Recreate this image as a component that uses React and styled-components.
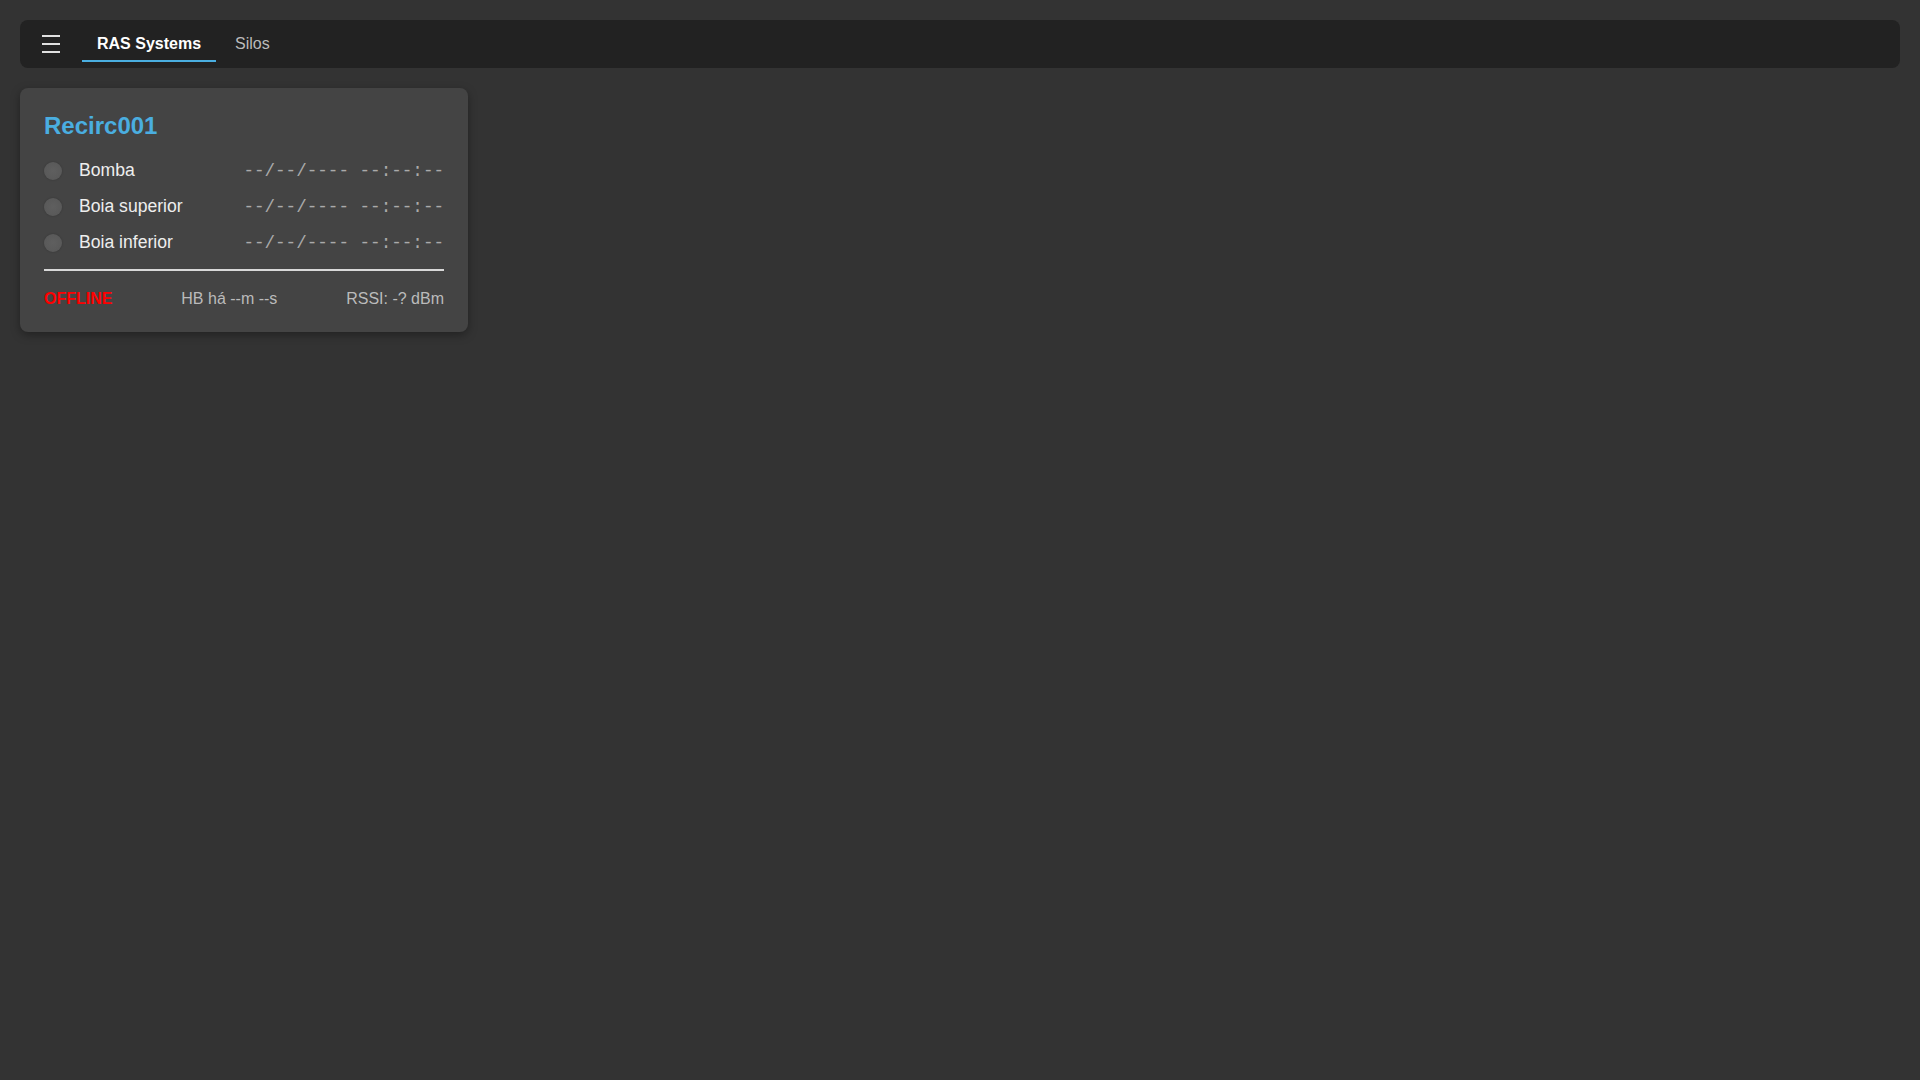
import React from "react";
import styled, { createGlobalStyle } from "styled-components";

const Global = createGlobalStyle`
  html, body { margin: 0; padding: 0; background: #333333; }
  body { font-family: "Liberation Sans", Arial, sans-serif; color: #eeeeee; }
  * { box-sizing: border-box; }
`;

const Page = styled.div`
  min-height: 100vh;
  padding: 20px;
  display: flex;
  flex-direction: column;
  gap: 20px;
`;

const NavBar = styled.nav`
  height: 48px;
  background: #222222;
  border-radius: 8px;
  display: flex;
  align-items: center;
  gap: 4px;
  padding: 0 22px 0 22px;
`;

const MenuButton = styled.button`
  background: none;
  border: 0;
  padding: 0;
  margin-right: 18px;
  width: 18px;
  height: 18px;
  display: flex;
  color: #e0e0e0;
  cursor: pointer;
`;

const Tab = styled.button`
  background: none;
  border: 0;
  border-bottom: 2px solid ${(p) => (p.$active ? "#4aaee0" : "transparent")};
  padding: 8px 15px 7px;
  margin-top: 0;
  font-family: "Liberation Sans", Arial, sans-serif;
  font-size: 16px;
  line-height: 18px;
  font-weight: ${(p) => (p.$active ? 700 : 400)};
  color: ${(p) => (p.$active ? "#ffffff" : "#bbbbbb")};
  cursor: pointer;
`;

const Card = styled.section`
  width: 448px;
  background: #444444;
  border-radius: 8px;
  padding: 24px;
  box-shadow: 0 3px 10px rgba(0, 0, 0, 0.35);
`;

const Title = styled.h2`
  margin: 0 0 13px;
  font-size: 24px;
  line-height: 27.6px;
  font-weight: 700;
  color: #4aaee0;
`;

const Row = styled.div`
  height: 36px;
  display: flex;
  align-items: center;
`;

const Dot = styled.span`
  width: 18px;
  height: 18px;
  border-radius: 50%;
  background: radial-gradient(circle at 50% 50%, #5f5f5f 0%, #5a5a5a 60%, #535353 100%);
  box-shadow: 0 0 2px rgba(0, 0, 0, 0.25);
  margin-right: 17px;
  flex: none;
`;

const Label = styled.span`
  font-size: 17.6px;
  color: #eeeeee;
  flex: 1;
`;

const Stamp = styled.span`
  font-family: "Liberation Mono", "Courier New", monospace;
  font-size: 17.6px;
  color: #aaaaaa;
  white-space: pre;
`;

const Divider = styled.hr`
  border: 0;
  height: 2px;
  background: #d8d8d8;
  margin: 8px 0 19px;
`;

const Footer = styled.div`
  display: flex;
  justify-content: space-between;
  align-items: center;
  font-size: 16px;
  line-height: 18.4px;
  color: #bbbbbb;
`;

const Status = styled.span`
  color: #ff0000;
  font-weight: 700;
`;

const rows = ["Bomba", "Boia superior", "Boia inferior"];

function MenuIcon() {
  return (
    <svg width="18" height="18" viewBox="0 0 18 18">
      <rect x="0" y="0" width="18" height="2" fill="currentColor" />
      <rect x="0" y="8" width="18" height="2" fill="currentColor" />
      <rect x="0" y="16" width="18" height="2" fill="currentColor" />
    </svg>
  );
}

export default function App() {
  return (
    <>
      <Global />
      <Page>
        <NavBar>
          <MenuButton aria-label="menu">
            <MenuIcon />
          </MenuButton>
          <Tab $active>RAS Systems</Tab>
          <Tab>Silos</Tab>
        </NavBar>
        <Card>
          <Title>Recirc001</Title>
          {rows.map((r) => (
            <Row key={r}>
              <Dot />
              <Label>{r}</Label>
              <Stamp>--/--/---- --:--:--</Stamp>
            </Row>
          ))}
          <Divider />
          <Footer>
            <Status>OFFLINE</Status>
            <span>HB há --m --s</span>
            <span>RSSI: -? dBm</span>
          </Footer>
        </Card>
      </Page>
    </>
  );
}
